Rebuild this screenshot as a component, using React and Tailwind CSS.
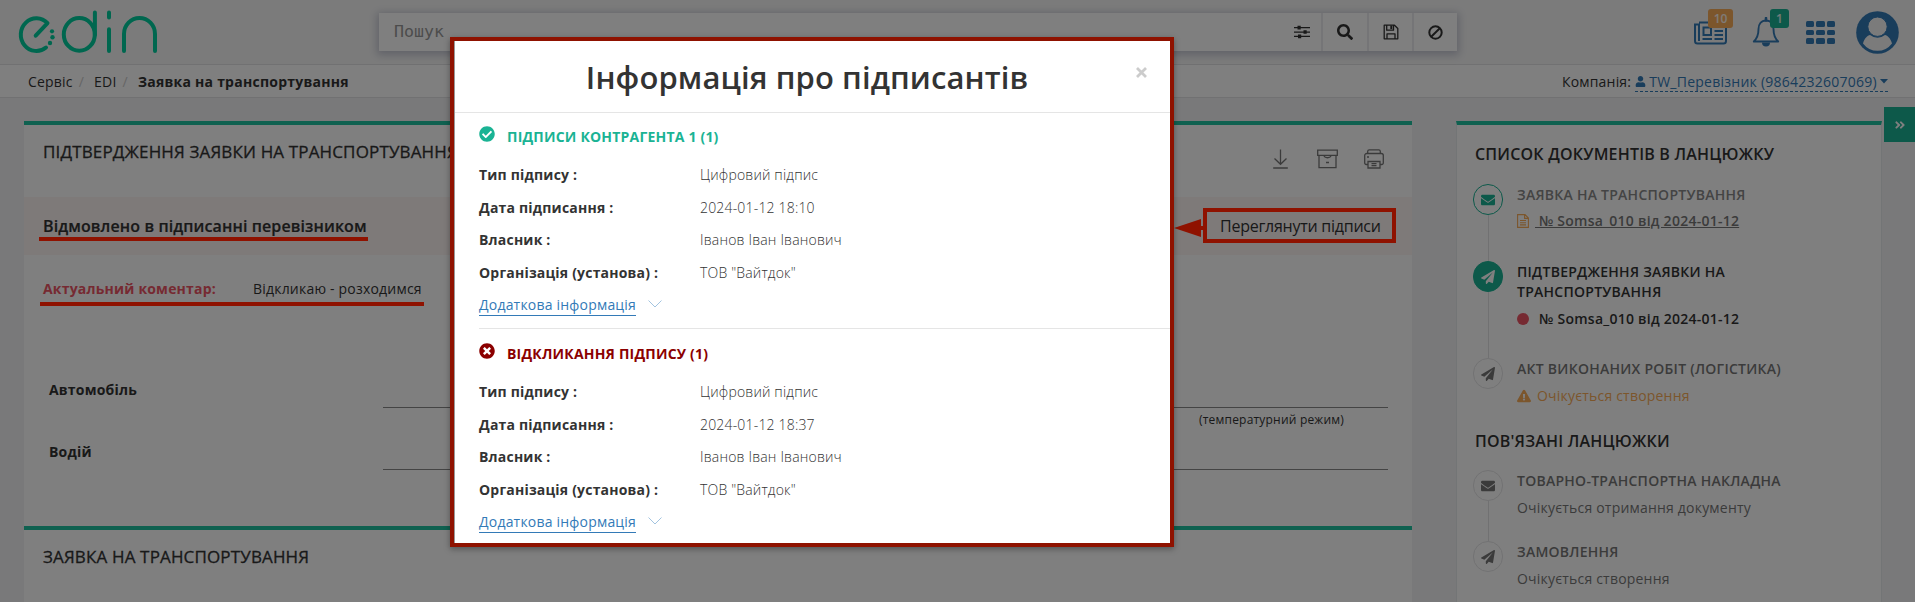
import React from "react";
import {
  FaSearch, FaEnvelope, FaPaperPlane, FaExclamationTriangle,
  FaUser, FaAngleDoubleRight, FaCheckCircle, FaTimesCircle,
} from "react-icons/fa";

function Logo() {
  return (
    <svg width="142" height="46" viewBox="0 0 142 46" fill="none" stroke="#00ce9f" strokeWidth="4" strokeLinecap="round">
      <path d="M17.700 25.700L29.500 13.200A15.600 16.300 0 1 0 28 37.500" strokeLinejoin="round" />
      <g fill="#00ce9f" stroke="none">
        <circle cx="34" cy="21.300" r="2.100" />
        <circle cx="34.500" cy="27.200" r="2.200" />
        <circle cx="32" cy="33" r="2.200" />
      </g>
      <ellipse cx="61.300" cy="24.400" rx="15.500" ry="16.400" />
      <path d="M76.900 2.500V25M91 2.500V7.500M91 19.300V41M106 41V24A15.500 16 0 0 1 137 24V41" />
    </svg>
  );
}

function Sliders() {
  return (
    <svg width="16" height="14" viewBox="0 0 16 14" fill="#333">
      <path d="M0 2h16v1.3H0zM0 6.4h16v1.3H0zM0 10.8h16v1.3H0z" />
      <path d="M3.5 .8h3.2v3.6H3.5zM9.5 5.2h3.2v3.6H9.5zM4 9.6h3.2v3.6H4z" />
    </svg>
  );
}

function Floppy() {
  return (
    <svg width="16" height="16" viewBox="0 0 16 16" fill="none" stroke="#333" strokeWidth="1.300" strokeLinejoin="round">
      <path d="M1.200 1.200H11.500L14.800 4.500V14.800H1.200zM4 14.500V9.800H12V14.500M3.700 1.500V6.200H10.500V1.500" />
      <path d="M7.300 1.500H9.300V5H7.300z" fill="#333" stroke="none" />
    </svg>
  );
}

function Ban() {
  return (
    <svg width="15" height="15" viewBox="0 0 15 15" fill="none" stroke="#333" strokeWidth="2">
      <circle cx="7.500" cy="7.500" r="6.200" />
      <path d="M3.200 11.800L11.800 3.200" />
    </svg>
  );
}

function Newspaper() {
  return (
    <svg width="34" height="24" viewBox="0 0 34 24" fill="none" stroke="#337ab7" strokeWidth="2">
      <path d="M5 1.5H32V20a2.5 2.5 0 0 1-2.5 2.5H3.5A2.5 2.5 0 0 1 1 20V3.5H5V20" />
      <path d="M9.5 6.5h7.5v7.5H9.5zM20.5 6H29M20.5 10H29M20.5 14H29M8.5 18H18M20.5 18H29" />
    </svg>
  );
}

function Bell() {
  return (
    <svg width="28" height="30" viewBox="0 0 28 30" fill="none" stroke="#337ab7" strokeWidth="1.9">
      <path d="M14 3.5C9 3.5 6.5 7.500 6.500 12C6.500 18 5 21.500 1.800 24.500H26.200C23 21.500 21.500 18 21.500 12C21.500 7.500 19 3.500 14 3.500Z" strokeLinejoin="round" />
      <path d="M14 1V3.500" strokeWidth="2.600" strokeLinecap="round" />
      <path d="M10 25.500a4 4 0 0 0 8 0z" fill="#337ab7" stroke="none" />
    </svg>
  );
}

function Avatar() {
  return (
    <svg width="43" height="43" viewBox="0 0 43 43">
      <circle cx="21.500" cy="21.500" r="21.300" fill="#337ab7" />
      <path d="M7 32.500C8.500 27 11.500 24.500 14 24A12 12 0 0 0 29 24C31.500 24.500 34.500 27 36 32.500A18 18 0 0 1 7 32.500Z" fill="#f7f7f7" />
      <circle cx="21.500" cy="15.700" r="9.700" fill="#f7f7f7" stroke="#337ab7" strokeWidth="1" />
    </svg>
  );
}

function DownloadIcon() {
  return (
    <svg width="15" height="20" viewBox="0 0 15 20" fill="none" stroke="#777" strokeWidth="1.3">
      <path d="M7.500 .5V15M1.500 9.500L7.500 15.300L13.500 9.500M.2 19H14.800" />
    </svg>
  );
}

function ArchiveIcon() {
  return (
    <svg width="21" height="20" viewBox="0 0 21 20" fill="none" stroke="#777" strokeWidth="1.300">
      <path d="M.700 1.100H20.300V6.300H.700zM2 6.300V18.700H19V6.300M7 6.500C7.500 9.500 13.500 9.500 14 6.500M9 13.500H12" />
    </svg>
  );
}

function PrinterIcon() {
  return (
    <svg width="20" height="20" viewBox="0 0 20 20" fill="none" stroke="#777" strokeWidth="1.300">
      <path d="M3.700 4.500V2.200A1.500 1.500 0 0 1 5.200 .8H14.800A1.500 1.500 0 0 1 16.300 2.200V4.500M4 15.500H2.200A1.500 1.500 0 0 1 .7 14V6.500A2 2 0 0 1 2.700 4.500H17.300A2 2 0 0 1 19.300 6.500V14A1.500 1.500 0 0 1 17.800 15.500H16M4 12.500H16V19H4zM7.500 14.700H12.500M7.500 16.700H12.500M3 8H5" />
    </svg>
  );
}

function FileIcon() {
  return (
    <svg width="12" height="14" viewBox="0 0 12 14" fill="none" stroke="#f8ac59" strokeWidth="1.100">
      <path d="M.6 .6H8L11.400 4V13.400H.6zM7.600 .6V4.400H11.400M3 6.500H9M3 8.700H9M3 10.900H9" />
    </svg>
  );
}

function Badge({ children, className }) {
  return (
    <span className={`absolute flex h-[19px] items-center justify-center rounded-[3px] text-[12px] font-semibold tracking-normal text-white/90 ${className}`}>
      {children}
    </span>
  );
}

function Header() {
  return (
    <header className="flex h-[65px] shrink-0 border-b border-[#e2e2e4] bg-[#f7f7f7]">
      <div className="w-[379px] shrink-0 pt-[10px] pl-[18px]"><Logo /></div>
      <div className="mt-[13px] flex h-[38px] w-[1078px] shrink-0 gap-[2px] bg-[#eaeaee] shadow-[0_2px_8px_2px_rgba(130,135,165,0.45)]">
        <div className="flex grow items-center justify-between bg-white pr-[11px] pl-[15px]">
          <span className="font-['DejaVu_Sans_Mono',monospace] text-[16.600px] tracking-normal text-[#999]">Пошук</span>
          <Sliders />
        </div>
        <div className="flex w-[44px] items-center justify-center bg-white text-[16px] text-[#333]"><FaSearch /></div>
        <div className="flex w-[43px] items-center justify-center bg-white"><Floppy /></div>
        <div className="flex w-[43px] items-center justify-center bg-white"><Ban /></div>
      </div>
      <div className="flex pl-[237px]">
        <div className="relative mt-[21px] w-[58px]">
          <Newspaper />
          <Badge className="top-[-12px] left-[14px] w-[25px] bg-[#f8ac59]">10</Badge>
        </div>
        <div className="relative mt-[17px] w-[54px]">
          <Bell />
          <Badge className="top-[-8px] left-[18px] w-[19px] bg-[#1ab394]">1</Badge>
        </div>
        <div className="mt-[21px] grid h-[23px] w-[29px] grid-cols-3 gap-x-[2px] gap-y-[3px]">
          {Array.from({ length: 9 }, (_, i) => <span key={i} className="rounded-[1.500px] bg-[#337ab7]" />)}
        </div>
        <div className="mt-[11px] ml-[21px]"><Avatar /></div>
      </div>
    </header>
  );
}

function Breadcrumbs() {
  return (
    <div className="flex h-[33px] shrink-0 items-start border-b border-[#e2e2e4] bg-white pt-[7px] pr-[27px] pl-[28px] text-[14px] leading-5">
      <span>Сервіс</span>
      <span className="ml-[6px] text-[#ccc]">/</span>
      <span className="ml-[10px]">EDI</span>
      <span className="ml-[6px] text-[#ccc]">/</span>
      <b className="ml-[10px] font-bold tracking-[0.250px]">Заявка на транспортування</b>
      <span className="mr-[4px] ml-auto">Компанія:</span>
      <span className="flex h-[20px] items-center border-b border-dashed border-[#337ab7] tracking-[0.250px] text-[#337ab7]">
        <FaUser className="mr-[3px] text-[11px]" />
        TW_Перевізник (9864232607069)
        <svg className="ml-[3px]" width="8" height="5" viewBox="0 0 8 5" fill="#337ab7"><path d="M0 0H8L4 4.500Z" /></svg>
      </span>
    </div>
  );
}

function FormRow({ label, hint, className }) {
  return (
    <div className={`flex ${className}`}>
      <span className="w-[334px] font-bold">{label}</span>
      <div className="h-[28px] w-[1005px] border-b border-[#888]">
        {hint && <div className="pt-[32px] pl-[816px] text-[12px] leading-4">{hint}</div>}
      </div>
    </div>
  );
}

function MainCard() {
  const title = "text-[17px] leading-5 tracking-[0.150px] [-webkit-text-stroke:0.300px_#333] whitespace-nowrap";
  return (
    <div className="flex w-[1388px] flex-col bg-white">
      <div className="flex h-[76px] justify-between border-t-4 border-[#1fc2a0] pr-[28px] pl-[19px]">
        <h2 className={`pt-[17px] ${title}`}>ПІДТВЕРДЖЕННЯ ЗАЯВКИ НА ТРАНСПОРТУВАННЯ</h2>
        <div className="flex pt-[24px]">
          <DownloadIcon />
          <span className="ml-[29px]"><ArchiveIcon /></span>
          <span className="ml-[26px]"><PrinterIcon /></span>
        </div>
      </div>
      <div className="flex h-[58px] justify-between bg-[#fcf4f2] pr-[16px] pl-[15px] text-[16px]">
        <div className="pt-[19px]">
          <div className="h-[21px] pl-[4px] leading-5 font-semibold tracking-[0.110px] [-webkit-text-stroke:0.200px_#333]">Відмовлено в підписанні перевізником</div>
          <div className="relative z-20 h-[4px] w-[329px] bg-[#8f1200]" />
        </div>
        <div className="relative mt-[11px] h-[35px] w-[193px] pt-[8px] pl-[17px] leading-5 tracking-[-0.250px]">
          Переглянути підписи
          <div className="absolute inset-0 z-20 border-4 border-[#8f1200]" />
          <svg className="absolute top-[11px] -left-[29px] z-20" width="29" height="18" viewBox="0 0 29 18" fill="#8f1200">
            <path d="M0 9L27 0V18zM27 7h2v4h-2z" />
          </svg>
        </div>
      </div>
      <div className="flex h-[271px] flex-col pl-[16px] text-[14px] leading-5">
        <div className="flex h-[47px] pt-[24px] pl-[3px]">
          <b className="w-[210px] text-[#ed5565]">Актуальний коментар:</b>
          <span>Відкликаю - розходимся</span>
        </div>
        <div className="relative z-20 h-[4px] w-[384px] bg-[#8f1200]" />
        <FormRow label="Автомобіль" hint="(температурний режим)" className="mt-[74px] h-[62px] pl-[9px]" />
        <FormRow label="Водій" className="pl-[9px]" />
      </div>
      <div className="grow border-t-4 border-[#1fc2a0] pt-[17px] pl-[19px]">
        <h2 className={title}>ЗАЯВКА НА ТРАНСПОРТУВАННЯ</h2>
      </div>
    </div>
  );
}

function ChainItem({ icon, circle, title, titleClass, children, height, last }) {
  return (
    <div className={`flex ${height}`}>
      <div className="flex w-[30px] shrink-0 flex-col items-center">
        <div className={`flex h-[31px] w-[30px] shrink-0 items-center justify-center rounded-full border text-[14px] ${circle}`}>{icon}</div>
        {!last && <div className="w-px grow bg-[#e2e2e4]" />}
      </div>
      <div className="ml-[14px] w-[300px] pt-px text-[14px] leading-5">
        <div className={`font-semibold tracking-[0.260px] ${titleClass}`}>{title}</div>
        {children}
      </div>
    </div>
  );
}

function ChainPanel() {
  const idle = "border-[#e4e4e6] text-[#777]";
  return (
    <aside className="ml-[44px] w-[426px] shrink-0 border-x border-t-4 border-x-[#e7eaec] border-t-[#1fc2a0] bg-white pl-[16px]">
      <h3 className="h-[59px] pt-[19px] pl-[2px] text-[16px] leading-5 font-semibold">СПИСОК ДОКУМЕНТІВ В ЛАНЦЮЖКУ</h3>
      <ChainItem height="h-[77px]" icon={<FaEnvelope />} circle="border-[#1ab394] text-[#1ab394]" title="ЗАЯВКА НА ТРАНСПОРТУВАННЯ" titleClass="text-[#888]">
        <div className="mt-[6px] flex items-center font-semibold tracking-[0.250px] text-[#777]">
          <FileIcon /><span className="ml-[6px] whitespace-pre underline"> № Somsa_010 від 2024-01-12</span>
        </div>
      </ChainItem>
      <ChainItem height="h-[97px]" icon={<FaPaperPlane />} circle="border-[#1ab394] bg-[#1ab394] text-white" title={<>ПІДТВЕРДЖЕННЯ ЗАЯВКИ НА<br />ТРАНСПОРТУВАННЯ</>}>
        <div className="mt-[7px] flex items-center font-semibold tracking-[0.250px]">
          <span className="mr-[10px] h-[12px] w-[12px] rounded-full bg-[#ed5565]" />№ Somsa_010 від 2024-01-12
        </div>
      </ChainItem>
      <ChainItem height="h-[57px]" icon={<FaPaperPlane />} circle={idle} title="АКТ ВИКОНАНИХ РОБІТ (ЛОГІСТИКА)" titleClass="text-[#777]" last>
        <div className="mt-[7px] flex items-center text-[#f8ac59]">
          <FaExclamationTriangle className="mr-[6px]" />Очікується створення
        </div>
      </ChainItem>
      <h3 className="h-[55px] pt-[16px] pl-[2px] text-[16px] leading-5 font-semibold">ПОВ'ЯЗАНІ ЛАНЦЮЖКИ</h3>
      <ChainItem height="h-[71px]" icon={<FaEnvelope />} circle={idle} title="ТОВАРНО-ТРАНСПОРТНА НАКЛАДНА" titleClass="text-[#777]">
        <div className="mt-[7px] text-[#777]">Очікується отримання документу</div>
      </ChainItem>
      <ChainItem height="h-[60px]" icon={<FaPaperPlane />} circle={idle} title="ЗАМОВЛЕННЯ" titleClass="text-[#777]" last>
        <div className="mt-[7px] text-[#777]">Очікується створення</div>
      </ChainItem>
    </aside>
  );
}

function SignatureSection({ icon, title, tone, date, className }) {
  const rows = [
    ["Тип підпису :", "Цифровий підпис"],
    ["Дата підписання :", date],
    ["Власник :", "Іванов Іван Іванович"],
    ["Організація (установа) :", "ТОВ \"Вайтдок\""],
  ];
  return (
    <section className={`ml-[24px] text-[14px] leading-5 ${className}`}>
      <div className={`flex h-[32px] font-bold ${tone}`}>
        <span className="mr-[12px] -mt-px text-[16px]">{icon}</span>
        {title}
      </div>
      {rows.map(([label, value]) => (
        <div key={label} className="flex h-[32.600px] items-center">
          <b className="w-[221px] font-bold">{label}</b>
          <span className="font-light tracking-[0.180px]">{value}</span>
        </div>
      ))}
      <div className="flex h-[32.600px] items-center text-[#337ab7]">
        <span className="border-b border-[#337ab7]">Додаткова інформація</span>
        <svg className="-mt-[3px] ml-[12px]" width="14" height="8" viewBox="0 0 14 8" fill="none" stroke="#a3c4e0" strokeWidth="1">
          <path d="M.5 .5L7 7L13.500 .5" />
        </svg>
      </div>
    </section>
  );
}

function SignersModal() {
  return (
    <div className="absolute top-[37px] left-[450px] z-30 h-[510px] w-[724px] border-4 border-[#8f1200] bg-white shadow-[0_2px_6px_rgba(0,0,0,0.35)]">
      <div className="flex h-full flex-col border-l border-[#999]">
        <div className="relative h-[72px] border-b border-[#e5e5e5] pr-[11px] text-center">
          <h1 className="pt-[15px] text-[31px] leading-[42px] font-semibold tracking-[0.100px]">Інформація про підписантів</h1>
          <svg className="absolute top-[26px] right-[23px]" width="11" height="11" viewBox="0 0 11 11" stroke="#ccc" strokeWidth="2.800">
            <path d="M1 1L10 10M10 1L1 10" />
          </svg>
        </div>
        <SignatureSection className="h-[216px] border-b border-[#e5e5e5] pt-[14px]" tone="text-[#1ab394]" icon={<FaCheckCircle />} title="ПІДПИСИ КОНТРАГЕНТА 1 (1)" date="2024-01-12 18:10" />
        <SignatureSection className="pt-[15px]" tone="text-[#8b0000]" icon={<FaTimesCircle />} title="ВІДКЛИКАННЯ ПІДПИСУ (1)" date="2024-01-12 18:37" />
      </div>
    </div>
  );
}

export default function App() {
  return (
    <div className="relative flex h-[602px] w-[1915px] flex-col overflow-hidden bg-[#f3f3f4] font-['Open_Sans',sans-serif] tracking-[0.200px] text-[#333]">
      <Header />
      <Breadcrumbs />
      <main className="flex grow pl-[24px]">
        <div className="flex pt-[23px]">
          <MainCard />
          <ChainPanel />
        </div>
        <div className="mt-[9px] ml-auto flex h-[35px] w-[31px] items-center justify-center bg-[#1ab394] text-white">
          <FaAngleDoubleRight className="text-[12px]" />
        </div>
      </main>
      <div className="absolute inset-0 z-10 bg-black/50" />
      <SignersModal />
    </div>
  );
}
